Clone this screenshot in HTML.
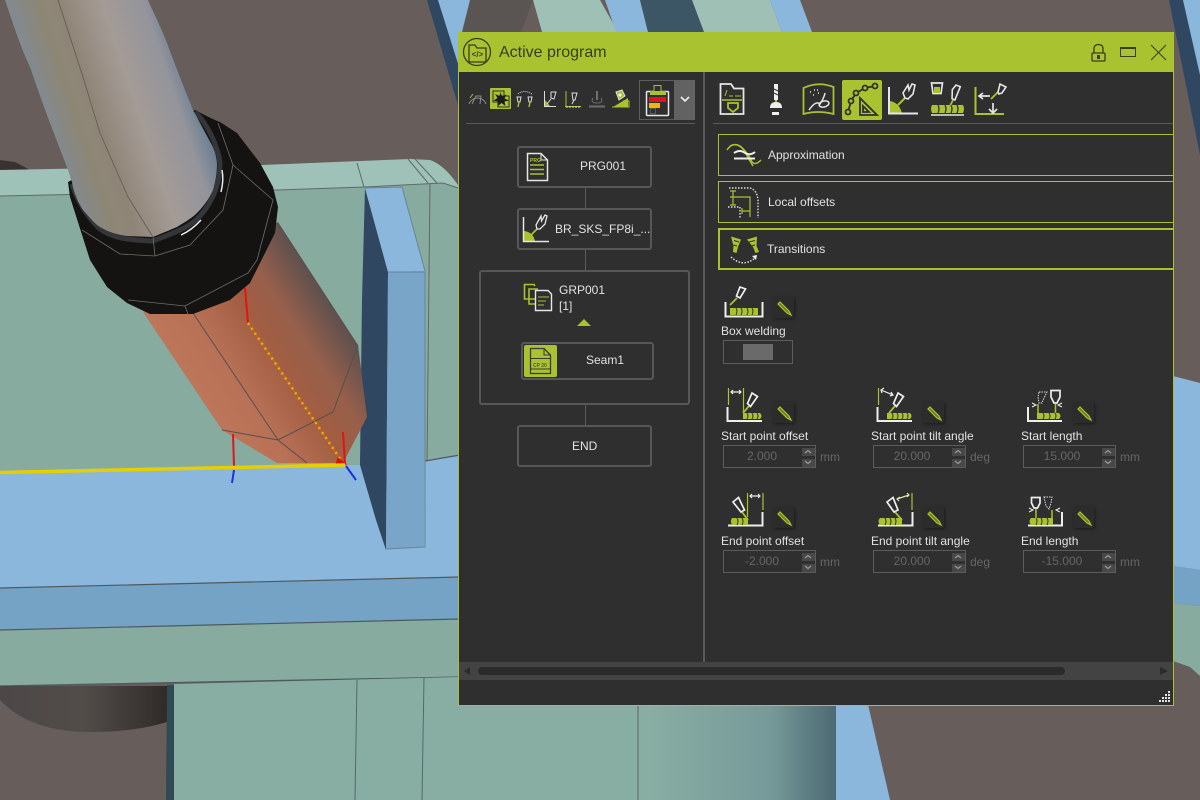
<!DOCTYPE html>
<html><head><meta charset="utf-8"><title>Active program</title>
<style>
html,body{margin:0;padding:0;width:1200px;height:800px;overflow:hidden;background:#675d5b}
body{position:relative;font:12px/14px "Liberation Sans",sans-serif;color:#e0e0e0}
svg{position:absolute;left:0;top:0}
.a{position:absolute;box-sizing:border-box;white-space:nowrap}
.t{position:absolute;white-space:nowrap;line-height:14px;font-size:12px;color:#e2e2e2}
.node{position:absolute;box-sizing:border-box;border:2px solid #575757;border-radius:3px}
.inp{position:absolute;box-sizing:border-box;width:93px;height:23px;border:1px solid #5c5c5c;color:#666;text-align:center;line-height:21px;padding-right:15px;font-size:12px}
.sp{position:absolute;left:78px;width:13px;height:8px;background:#484848}
.u{position:absolute;color:#666;font-size:12px;line-height:14px}
.eb{position:absolute;width:21px;height:21px;background:#2c2c2c;border-radius:2px;box-shadow:1px 1px 3px rgba(0,0,0,.45)}
</style></head><body>
<svg width="1200" height="800" viewBox="0 0 1200 800">
<defs>
<linearGradient id="tube" gradientUnits="userSpaceOnUse" x1="40" y1="120" x2="205" y2="65">
<stop offset="0" stop-color="#7f8b98"/><stop offset=".2" stop-color="#8d8675"/><stop offset=".32" stop-color="#8f8577"/><stop offset=".55" stop-color="#a49b96"/><stop offset=".78" stop-color="#93949b"/><stop offset=".92" stop-color="#627a92"/><stop offset="1" stop-color="#8793a0"/></linearGradient>
<linearGradient id="cop" gradientUnits="userSpaceOnUse" x1="143" y1="312" x2="278" y2="224">
<stop offset="0" stop-color="#bd7659"/><stop offset=".25" stop-color="#b87156"/><stop offset=".55" stop-color="#a25e42"/><stop offset=".75" stop-color="#975f4b"/><stop offset="1" stop-color="#5f504e"/></linearGradient>
<linearGradient id="cyl" x1="0" x2="1" y1="0" y2="0"><stop offset="0" stop-color="#88ada3"/><stop offset=".72" stop-color="#88ada3"/><stop offset=".9" stop-color="#769a99"/><stop offset="1" stop-color="#4c6a72"/></linearGradient>
<linearGradient id="dk" x1="0" x2="1" y1="0" y2="0"><stop offset="0" stop-color="#4c4847"/><stop offset=".5" stop-color="#524c49"/><stop offset="1" stop-color="#2f2b29"/></linearGradient>
</defs>
<rect width="1200" height="800" fill="#675d5b"/>
<!-- top stripes -->
<polygon points="427,0 438,0 460,70 460,112" fill="#2f4760"/>
<polygon points="438,0 470,0 460,70" fill="#8bb7dc"/>
<polygon points="470,0 533,0 521,32 462,32" fill="#5a5553"/>
<polygon points="533,0 600,0 618,32 542,32" fill="#9ec0b5"/>
<polygon points="605,0 640,0 648,32 616,32" fill="#8bb7dc"/>
<polygon points="640,0 692,0 704,32 648,32" fill="#3d5666"/>
<polygon points="692,0 770,0 782,32 704,32" fill="#9ec0b5"/>
<polygon points="770,0 800,0 812,32 782,32" fill="#8bb7dc"/>
<!-- right side -->
<polygon points="1169,0 1183,0 1200,75 1200,155" fill="#2f4760"/>
<polygon points="1183,0 1200,0 1200,75" fill="#8bb7dc"/>
<polygon points="1173,376 1200,383 1200,570 1173,566" fill="#8bb7dc"/>
<polygon points="1173,566 1200,570 1200,606 1173,603" fill="#74a3c6"/>
<polygon points="1173,603 1200,606 1200,676 1190,667 1173,661" fill="#87ab9f"/>
<!-- dark shape at left -->
<polygon points="0,160 15,162 30,170 0,170" fill="#3a3230"/>
<!-- green block -->
<path d="M0 170L262 165 410 159 430 160Q445 165 460 188L443 183 365 187 277 190 0 196Z" fill="#9fc2b8"/>
<polygon points="0,196 277,190 365,187 443,183 460,188 460,480 0,480" fill="#87ab9f"/>
<path d="M0 196L277 190 365 187 443 183 458 188M357 163L364 187M408 159L428 183M415 159L437 183M430 183L427 465" stroke="#5e6a68" stroke-width="1" fill="none"/>
<!-- blue plate -->
<polygon points="0,473 345,465 388,465 425,461 460,455 460,640 0,640" fill="#8bb7dc"/>
<polygon points="0,588 460,577 460,619 0,630" fill="#74a3c6"/>
<polygon points="0,630 460,619 460,677 0,686" fill="#87ab9f"/>
<path d="M0 588L460 577M0 630L460 619M0 686L460 677M425 461L460 455" stroke="#4e5a60" stroke-width="1.200" fill="none"/>
<!-- bottom -->
<path d="M0 686H167V722Q135 732 90 732 30 732 0 700Z" fill="url(#dk)"/>
<polygon points="167,685 174,685 174,800 166,800" fill="#2f4a52"/>
<polygon points="174,684 460,677 836,677 836,800 174,800" fill="url(#cyl)"/>
<path d="M357 680L355 800M424 678L422 800M638 700V800" stroke="#58686a" fill="none"/>
<polygon points="836,700 867,700 890,800 836,800" fill="#8bb7dc"/>
<path d="M860 705Q875 705 885 700H870Z" fill="#3c3634"/>
<!-- vertical plate -->
<polygon points="365,188 388,272 386,550 376,520 360,465 362,300" fill="#2f4760"/>
<polygon points="365,188 402,187 425,271 388,272" fill="#8bb7dc"/>
<polygon points="388,272 425,271 424,547 386,549" fill="#78a5c8"/>
<path d="M365 188L402 187 425 271M388 272H425V547L386 549" stroke="#6b8494" fill="none"/>
<!-- copper -->
<polygon points="143,312 278,222 358,345 367,417 343,463 277,463 222,430" fill="url(#cop)"/>
<path d="M193 313L278 440 333 412 358 345M222 430L278 440 307 463" stroke="#55504e" stroke-width="1" fill="none"/>
<!-- collar -->
<path d="M195 110C205 115 212 119 220 122L237 133 260 163 273 187 278 207 275 233 250 283 230 300 193 314 150 314 127 303 107 287 90 260 70 197 68 182Z" fill="#141312"/>
<path d="M72 184C76 198 86 216 100 229 112 238 128 240 153 241 170 234 190 228 200 216 214 200 220 182 220 163 218 145 206 122 195 112" fill="none" stroke="#34363a" stroke-width="5"/>
<path d="M181 235Q192 230 201 220M222 170Q224 180 221 192" stroke="#e6ecf2" stroke-width="1.500" fill="none"/>
<path d="M82 230L120 254 155 256 190 245 223 210 233 165 218 123M233 165L273 200 257 260 248 273 185 306 128 300M185 306L188 314M153 237L155 256" stroke="#6e6e6e" fill="none" stroke-width=".8"/>
<!-- tube -->
<path d="M5 0C15 30 22 50 30 67 38 90 45 110 50 123L68 170C70 176 71 180 72 182 74 195 80 205 83 210 90 218 95 224 100 227 108 232 118 235 127 236L153 237C160 234 170 230 177 227 185 222 192 218 197 213 205 205 210 197 213 190 216 180 217 172 217 163 216 155 215 152 213 147L193 110C185 90 175 65 167 43 160 25 153 12 148 0Z" fill="url(#tube)"/>
<path d="M58 0L83 77 100 133 128 197 153 237" stroke="#5b5b5b" fill="none" stroke-width=".8"/>
<!-- axes -->
<g fill="none" stroke-linecap="butt">
<path d="M245 288L248 323M233 434L234 466M343 432L345 463" stroke="#e01616" stroke-width="2"/>
<path d="M234 470L232 483M346 466L356 480" stroke="#1a2fe6" stroke-width="2"/>
<path d="M248 323L343 463" stroke="#c9650f" stroke-width="1.500"/>
<path d="M248 323L343 463" stroke="#e8b010" stroke-width="2.500" stroke-dasharray="2 4"/>
<path d="M338 458L346 464 336 464Z" fill="#d81010" stroke="#d81010"/>
<path d="M0 472.500L345 465" stroke="#e6cf00" stroke-width="3.500"/>
</g>
</svg>

<!-- PANEL -->
<div class="a" style="left:458px;top:32px;width:716px;height:674px;background:#2f2f2f;border:1px solid #a9c230"></div>
<div class="a" style="left:458px;top:32px;width:716px;height:40px;background:#a9c230"></div>
<div class="t" style="left:499px;top:43px;font-size:16px;line-height:20px;color:#3a3d20">Active program</div>
<div class="a" style="left:703px;top:72px;width:2px;height:590px;background:#5a5a5a"></div>
<div class="a" style="left:459px;top:662px;width:714px;height:18px;background:#434343"></div>
<div class="a" style="left:478px;top:667px;width:587px;height:8px;border-radius:4px;background:#2b2b2b"></div>
<div class="a" style="left:466px;top:123px;width:229px;height:1px;background:#5a5a5a"></div>
<div class="a" style="left:713px;top:123px;width:460px;height:1px;background:#5a5a5a"></div>

<!-- dropdown -->
<div class="a" style="left:639px;top:80px;width:56px;height:40px;border:1px solid #5c5c5c"></div>
<div class="a" style="left:674px;top:80px;width:21px;height:40px;background:#626262"></div>
<!-- active bgs -->
<div class="a" style="left:490px;top:88px;width:21px;height:21px;background:#a9c230;border-radius:1px"></div>
<div class="a" style="left:842px;top:80px;width:40px;height:40px;background:#a9c230;border-radius:2px"></div>

<!-- sections -->
<div class="a" style="left:718px;top:134px;width:455px;height:42px;border:1px solid #a9c230;border-right:0"></div>
<div class="a" style="left:718px;top:181px;width:455px;height:42px;border:1px solid #a9c230;border-right:0"></div>
<div class="a" style="left:718px;top:228px;width:455px;height:42px;border:2px solid #a9c230;border-right:0"></div>
<div class="t" style="left:768px;top:148px">Approximation</div>
<div class="t" style="left:768px;top:195px">Local offsets</div>
<div class="t" style="left:767px;top:242px">Transitions</div>

<!-- tree -->
<div class="a" style="left:585px;top:188px;width:1px;height:20px;background:#5b5b5b"></div>
<div class="a" style="left:585px;top:250px;width:1px;height:20px;background:#5b5b5b"></div>
<div class="a" style="left:585px;top:405px;width:1px;height:20px;background:#5b5b5b"></div>
<div class="node" style="left:517px;top:146px;width:135px;height:42px"></div>
<div class="node" style="left:517px;top:208px;width:135px;height:42px"></div>
<div class="node" style="left:479px;top:270px;width:211px;height:135px"></div>
<div class="node" style="left:521px;top:342px;width:133px;height:38px"></div>
<div class="a" style="left:524px;top:345px;width:33px;height:32px;background:#a9c230;border-radius:2px"></div>
<div class="node" style="left:517px;top:425px;width:135px;height:42px"></div>
<div class="t" style="left:580px;top:159px">PRG001</div>
<div class="t" style="left:555px;top:222px">BR_SKS_FP8i_...</div>
<div class="t" style="left:559px;top:283px">GRP001</div>
<div class="t" style="left:559px;top:299px">[1]</div>
<div class="t" style="left:586px;top:353px">Seam1</div>
<div class="t" style="left:572px;top:439px">END</div>

<!-- box welding -->
<div class="eb" style="left:773px;top:297px"></div>
<div class="t" style="left:721px;top:324px">Box welding</div>
<div class="a" style="left:723px;top:340px;width:70px;height:24px;border:1px solid #5c5c5c"></div>
<div class="a" style="left:743px;top:344px;width:30px;height:16px;background:#6a6a6a"></div>

<!-- fields row 1 -->
<div class="eb" style="left:773px;top:402px"></div><div class="eb" style="left:923px;top:402px"></div><div class="eb" style="left:1073px;top:402px"></div>
<div class="t" style="left:721px;top:429px">Start point offset</div>
<div class="t" style="left:871px;top:429px">Start point tilt angle</div>
<div class="t" style="left:1021px;top:429px">Start length</div>
<div class="inp" style="left:723px;top:445px">2.000<div class="sp" style="top:2px"></div><div class="sp" style="top:13px"></div></div>
<div class="inp" style="left:873px;top:445px">20.000<div class="sp" style="top:2px"></div><div class="sp" style="top:13px"></div></div>
<div class="inp" style="left:1023px;top:445px">15.000<div class="sp" style="top:2px"></div><div class="sp" style="top:13px"></div></div>
<div class="u" style="left:820px;top:450px">mm</div><div class="u" style="left:970px;top:450px">deg</div><div class="u" style="left:1120px;top:450px">mm</div>
<!-- fields row 2 -->
<div class="eb" style="left:773px;top:507px"></div><div class="eb" style="left:923px;top:507px"></div><div class="eb" style="left:1073px;top:507px"></div>
<div class="t" style="left:721px;top:534px">End point offset</div>
<div class="t" style="left:871px;top:534px">End point tilt angle</div>
<div class="t" style="left:1021px;top:534px">End length</div>
<div class="inp" style="left:723px;top:550px">-2.000<div class="sp" style="top:2px"></div><div class="sp" style="top:13px"></div></div>
<div class="inp" style="left:873px;top:550px">20.000<div class="sp" style="top:2px"></div><div class="sp" style="top:13px"></div></div>
<div class="inp" style="left:1023px;top:550px">-15.000<div class="sp" style="top:2px"></div><div class="sp" style="top:13px"></div></div>
<div class="u" style="left:820px;top:555px">mm</div><div class="u" style="left:970px;top:555px">deg</div><div class="u" style="left:1120px;top:555px">mm</div>

<!-- ICON OVERLAY -->
<svg width="1200" height="800" viewBox="0 0 1200 800" fill="none">
<defs>
<g id="pen"><path d="M5 7L7 5 16 14 18 18 14 16Z" fill="#6f7d22" stroke="#a9c230" stroke-width="1.200"/></g>
</defs>

<!-- title icons -->
<g stroke="#3a3d20" stroke-width="1.300">
<circle cx="477" cy="52" r="13.500"/>
<path d="M469 62V45H475L477 48H486V62Z"/>
<path d="M1093 53H1104Q1105 53 1105 54V60Q1105 61 1104 61H1093Q1092 61 1092 60V54Q1092 53 1093 53ZM1094 53V49Q1094 44.500 1098.500 44.500 1103 44.500 1103 49V53"/>
<path d="M1120.500 48.500H1135.500V56.500H1120.500Z" stroke-width="1"/><path d="M1120 48H1136" stroke-width="2"/>
<path d="M1151 45L1166 60M1166 45L1151 60" stroke-width="1"/>
</g>
<rect x="1097" y="55" width="3" height="4" fill="#3a3d20"/>
<text x="477.500" y="57" font-family="Liberation Sans" font-size="8" font-weight="bold" text-anchor="middle" fill="#3a3d20">&lt;/&gt;</text>

<!-- left toolbar -->
<path d="M469 104A9 9 0 0 1 486 104" stroke="#8a8a8a"/><path d="M472 104L476 96H481L480 104" stroke="#8a8a8a"/><path d="M470 98L473 94" stroke="#a9c230"/>
<g stroke="#2f2f2f"><rect x="493" y="91" width="11" height="11"/><rect x="498" y="96" width="11" height="11"/></g>
<path d="M500.500 92L502 96.500 506.500 94.500 504.500 98.500 509 100.500 504.500 101.500 505.500 106 501.500 103 498 106 498.500 101.500 493.500 100.500 497.500 98 495 94 499.500 96Z" fill="#1c1c1c"/>
<path d="M518 94Q524 89 532 94" stroke="#ddd" stroke-dasharray="1 1"/>
<path d="M517 97H521L520 102H518ZM528 97H532L531 102H529Z" stroke="#ddd"/><path d="M519 102L518 107M530 102L529 107" stroke="#a9c230" stroke-width="1.400"/>
<path d="M544.500 91V106.500H556" stroke="#ddd"/><path d="M545 100L550 106H545Z" fill="#a9c230"/><path d="M551 92H556L554 99 551 98Z M551 99L547 104" stroke="#ddd"/>
<path d="M566 91V106M565 106.500H581" stroke="#a9c230"/><path d="M572 93H577L575 100H573ZM574 100L572 104" stroke="#ddd"/><path d="M566 107H581" stroke="#ddd" stroke-dasharray="2 1"/>
<g stroke="#6f6f6f"><path d="M597 91V100" stroke-width="2"/><path d="M593 98Q590 103 597 103 604 103 601 98"/><path d="M589 106.500H605" stroke-width="2"/></g>
<path d="M613 107L628 98V107Z" fill="#a9c230"/><path d="M612 107H629V101H623" stroke="#a9c230"/><path d="M616 92L622 90 625 96 619 100Z" fill="#a9c230" stroke="#ddd"/><circle cx="620" cy="95" r="1.500" fill="#fff"/>
<!-- clipboard -->
<rect x="646.500" y="91.500" width="22" height="24" rx="1" stroke="#e8e8e8" stroke-width="1.500"/>
<rect x="650" y="91" width="16" height="4" fill="#a9c230"/><rect x="654" y="85.500" width="7" height="6" stroke="#a9c230" fill="#2f2f2f"/>
<rect x="649" y="97" width="17" height="5" fill="#e0141a"/><rect x="649" y="103" width="11" height="5" fill="#f2b40a"/><rect x="650.500" y="108.500" width="5" height="5" stroke="#5a5a5a"/>
<path d="M681 97L685 101 689 97" stroke="#eee" stroke-width="1.600"/>

<!-- right toolbar -->
<path d="M720.500 84H731L734 88.500H743.500V114H720.500Z" stroke="#e6e6e6" stroke-width="1.800"/>
<path d="M722 100H742" stroke="#a9c230" stroke-width="1.500"/><path d="M728 103H738V108L733 112 728 108Z" stroke="#a9c230" stroke-width="1.800"/><path d="M725 96L727 90M729 96H733M735 96H741" stroke="#a9c230"/>
<rect x="774" y="84" width="4" height="16" fill="#eee"/><path d="M774 89L778 91M774 93L778 95" stroke="#2f2f2f"/>
<path d="M770 108Q770 102 776 102 782 102 782 108Z" fill="#eee"/><rect x="772" y="112" width="7" height="3" fill="#eee"/><rect x="775" y="100" width="2" height="2" fill="#a9c230"/>
<path d="M803.500 88Q818 81 833.500 87V114Q818 110 803.500 114Z" stroke="#a9c230" stroke-width="1.800"/>
<path d="M809 110Q816 100 820 104 824 98 825 93M810 92H811M814 90H815M818 93H819M813 95H814M817 90H818" stroke="#e6e6e6" stroke-width="1.500"/><ellipse cx="824" cy="104" rx="5" ry="3" stroke="#e6e6e6" stroke-width="1.500" transform="rotate(-15 824 104)"/>
<g stroke="#2f2f2f" stroke-width="1.800"><path d="M875 86L865 88 856 93 851 101 848 112"/><path d="M860 98V115H877ZM863 106V112H869Z"/></g>
<g fill="#a9c230" stroke="#2f2f2f" stroke-width="1.800"><circle cx="875" cy="86" r="2.500"/><circle cx="865" cy="88" r="2.500"/><circle cx="856" cy="93" r="2.500"/><circle cx="851" cy="101" r="2.500"/><circle cx="848" cy="112" r="2.500"/></g>
<path d="M890 101Q900 103 902 114H890Z" fill="#a9c230"/><path d="M889 87V113.500H918" stroke="#e6e6e6" stroke-width="2"/><path d="M898 105L905 98" stroke="#a9c230" stroke-width="2"/><path d="M905 98L903 93 908 85 909 90 912 84 915 85 913 94 908 99Z" stroke="#e6e6e6" stroke-width="1.600"/>
<path d="M931.500 83H942.500L941 93.500H933Z" stroke="#e6e6e6" stroke-width="1.700"/><rect x="934" y="87" width="6" height="6" fill="#a9c230"/>
<path d="M952 90L955 85 959.500 86 956 100 953 99Z" stroke="#e6e6e6" stroke-width="1.600" transform="rotate(8 955 92)"/><path d="M953 100L950 106" stroke="#a9c230" stroke-width="1.800"/>
<path d="M932 105H963Q965 109 963 113H932Q930 109 932 105Z" fill="#a9c230"/><path d="M938 105Q940 109 938 113M945 105Q947 109 945 113M951 105Q953 109 951 113M957 105Q959 109 957 113" stroke="#2f2f2f" stroke-width="1.300"/><path d="M931 115H964" stroke="#e6e6e6" stroke-width="1.500"/>
<path d="M975.500 87V114H1004" stroke="#a9c230" stroke-width="2"/><path d="M980 96H990M983 93L979 96 983 99" stroke="#e6e6e6" stroke-width="1.700"/><path d="M993 103V112M989 109L993 113 997 109" stroke="#e6e6e6" stroke-width="1.700"/><path d="M991 99L998 92" stroke="#a9c230" stroke-width="1.900"/><path d="M998 92L1000 84 1006 87 1002 93 999 94Z" stroke="#e6e6e6" stroke-width="1.600"/>

<!-- section icons -->
<path d="M727 150Q733 141 741 147 748 153 751 160 754 167 761 160" stroke="#a9c230" stroke-width="1.500"/><path d="M730 146Q738 142 744 150 748 158 753 166" stroke="#a9c230" stroke-width="1.500"/>
<path d="M734 153Q740 149 745 153 750 156 755 152M734 158.500H755" stroke="#eee" stroke-width="2"/>
<path d="M729 188H750Q757 190 758 200V218M728 207H740V218" stroke="#ddd" stroke-width="1.400" stroke-dasharray="1.500 1.500"/>
<path d="M730 197H750V217M733 191V205M730 191H736M730 205H736M742 211H750M742 208V214" stroke="#a9c230" stroke-width="1.200"/>
<path d="M731 236.500L741 239.500 738 247 736.500 253 733 252 733.500 246Z" fill="#a9c230"/><path d="M734 240.500L739 242M733.500 245L737 246" stroke="#2f2f2f"/>
<path d="M747 239.500L757 236.500 756.500 246 759 252 755.500 253 753 247Z" fill="#a9c230"/><path d="M749 242L755 240.500M751 246L755 245" stroke="#2f2f2f"/>
<path d="M731 257Q743 268 755 258" stroke="#ddd" stroke-width="1.500" stroke-dasharray="1.500 1.500"/><path d="M752 256L757 255 756 260Z" fill="#eee"/>

<!-- tree icons -->
<path d="M527.500 153.500H541L547.500 160V180.500H527.500Z" stroke="#e6e6e6" stroke-width="1.500"/><path d="M541 154V160H547" stroke="#e6e6e6"/>
<path d="M530 165H544M530 169.500H544M530 174H544" stroke="#a9c230" stroke-width="1.500"/>
<text x="530" y="162" font-family="Liberation Sans" font-size="5" font-weight="bold" fill="#a9c230">PRG</text>
<path d="M524 231Q533 232 535 241H524Z" fill="#a9c230"/><path d="M523.500 217V241.500H549" stroke="#e6e6e6" stroke-width="1.500"/><path d="M531 235L537 229" stroke="#a9c230" stroke-width="1.700"/><path d="M537 229L536 225 541 216 541.500 221 545 215 547 216 545 224 540 229Z" stroke="#e6e6e6" stroke-width="1.300"/>
<path d="M535 299H524.500V284.500H534L535 286M540 304H529V289H538" stroke="#a9c230" stroke-width="1.600"/>
<path d="M535.500 290.500H548L551.500 294V310.500H535.500Z" fill="#2f2f2f" stroke="#e6e6e6" stroke-width="1.400"/><path d="M538 297H549M538 301H546M538 305H544" stroke="#a9c230"/>
<path d="M577 326L584 319 591 326Z" fill="#a9c230"/>
<path d="M530.500 348.500H544L550.500 355V373.500H530.500Z" stroke="#3a3a3a" stroke-width="1.300"/><path d="M544 349V355H550M531 369H550" stroke="#3a3a3a"/>
<path d="M531 358.500H550" stroke="#3a3a3a"/>
<text x="533" y="367" font-family="Liberation Sans" font-size="5" font-weight="bold" fill="#556020">CP 20</text>

<!-- pencils -->
<use href="#pen" x="773" y="297"/>
<use href="#pen" x="773" y="402"/><use href="#pen" x="923" y="402"/><use href="#pen" x="1073" y="402"/>
<use href="#pen" x="773" y="507"/><use href="#pen" x="923" y="507"/><use href="#pen" x="1073" y="507"/>

<!-- box weld -->
<path d="M725.500 302V316.500H762.500V302" stroke="#eee" stroke-width="2"/>
<rect x="730" y="308" width="28" height="7" fill="#a9c230"/><path d="M736 308Q738 311 736 315M741 308Q743 311 741 315M747 308Q749 311 747 315M752 308Q754 311 752 315" stroke="#2f2f2f"/>
<path d="M740 287L745.500 289 740 298 736.500 296Z" stroke="#eee" stroke-width="1.700"/><path d="M737 298L730 305" stroke="#a9c230" stroke-width="1.800"/>

<!-- start offset -->
<path d="M727.500 407V421H762" stroke="#eee" stroke-width="2"/>
<path d="M728.500 388V405M743.500 388V412" stroke="#a9c230" stroke-width="1.200"/>
<path d="M731 392H741M733 390L731 392 733 394M739 390L741 392 739 394" stroke="#eee" stroke-width="1.200"/>
<path d="M752 393L757.500 396.500 750.500 406.500 747.500 403.500Z" stroke="#eee" stroke-width="1.700"/><path d="M749 406L743 413" stroke="#a9c230" stroke-width="1.800"/>
<path d="M743 413H760Q763 416 760 419H743Z" fill="#a9c230"/><path d="M747 413Q749 416 747 419M752 413Q754 416 752 419M757 413Q759 416 757 419" stroke="#2f2f2f"/>
<!-- start tilt -->
<path d="M877.500 407V421H912" stroke="#eee" stroke-width="2"/>
<path d="M878.500 388V405" stroke="#a9c230" stroke-width="1.200"/>
<path d="M881 390L893 395M884 388L881 390 882 393M891 392L893 395 890 396" stroke="#eee" stroke-width="1.200"/>
<path d="M898 393L903.500 396.500 896.500 406.500 893.500 403.500Z" stroke="#eee" stroke-width="1.700"/><path d="M895 406L889 413" stroke="#a9c230" stroke-width="1.800"/>
<path d="M887 413H910Q913 416 910 419H887Z" fill="#a9c230"/><path d="M892 413Q894 416 892 419M897 413Q899 416 897 419M902 413Q904 416 902 419M907 413Q909 416 907 419" stroke="#2f2f2f"/>
<!-- start length -->
<path d="M1028 407V421H1062" stroke="#eee" stroke-width="2"/>
<path d="M1039 392L1047 392 1044 398 1042 403 1039 403 1038 397Z" stroke="#ddd" stroke-dasharray="1.500 1"/>
<path d="M1051 390.500H1060V397L1057 403H1054L1051 397Z" stroke="#eee" stroke-width="1.700"/>
<path d="M1038 404V413M1055.500 404V413" stroke="#a9c230" stroke-width="1.500"/>
<path d="M1032 403L1036 405 1032 407M1062 403L1058 405 1062 407" stroke="#eee"/>
<path d="M1037 413H1059Q1062 416 1059 419H1037Z" fill="#a9c230"/><path d="M1043 413Q1045 416 1043 419M1049 413Q1051 416 1049 419M1055 413Q1057 416 1055 419" stroke="#2f2f2f"/>

<!-- end offset -->
<path d="M762.500 512V525.500H728" stroke="#eee" stroke-width="2"/>
<path d="M747.500 493V517M763 493V510" stroke="#a9c230" stroke-width="1.200"/>
<path d="M750 496H760M752 494L750 496 752 498M758 494L760 496 758 498" stroke="#eee" stroke-width="1.200"/>
<path d="M733 502L738.500 497.500 744.500 510 741 512Z" stroke="#eee" stroke-width="1.700"/><path d="M742 512L748 520" stroke="#a9c230" stroke-width="1.800"/>
<path d="M732 518H748V525H732Q730 521 732 518Z" fill="#a9c230"/><path d="M737 518Q739 521 737 525M742 518Q744 521 742 525" stroke="#2f2f2f"/>
<!-- end tilt -->
<path d="M912.500 512V525.500H878" stroke="#eee" stroke-width="2"/>
<path d="M912 493V510" stroke="#a9c230" stroke-width="1.200"/>
<path d="M897 499L909 495M900 497L897 499 899 501M907 493L909 495 907 497" stroke="#dde8a8" stroke-width="1.200"/>
<path d="M887 502L893 497.500 898 510 894 512Z" stroke="#eee" stroke-width="1.700"/><path d="M895 512L902 520" stroke="#a9c230" stroke-width="1.800"/>
<path d="M880 518H902V525H880Q877 521 880 518Z" fill="#a9c230"/><path d="M885 518Q887 521 885 525M890 518Q892 521 890 525M895 518Q897 521 895 525" stroke="#2f2f2f"/>
<!-- end length -->
<path d="M1062 512V525.500H1028" stroke="#eee" stroke-width="2"/>
<path d="M1031.500 497.500H1040V503L1037.500 508H1034L1031.500 503Z" stroke="#eee" stroke-width="1.700"/>
<path d="M1044 497L1052 497 1051 503 1049 509 1046 506Z" stroke="#ddd" stroke-dasharray="1.500 1"/>
<path d="M1036 509V518M1052 510V518" stroke="#a9c230" stroke-width="1.500"/>
<path d="M1029 508L1033 510 1029 512M1060 508L1056 510 1060 512" stroke="#eee"/>
<path d="M1031 518H1053V525H1031Q1028 521 1031 518Z" fill="#a9c230"/><path d="M1036 518Q1038 521 1036 525M1041 518Q1043 521 1041 525M1047 518Q1049 521 1047 525" stroke="#2f2f2f"/>

<!-- scroll arrows + grip -->
<path d="M470 667L464 671 470 675Z" fill="#2b2b2b"/><path d="M1160 667L1168 671 1160 675Z" fill="#2b2b2b"/>
<g fill="#dfe3ea"><rect x="1168" y="691" width="2" height="2"/><rect x="1165" y="694" width="2" height="2"/><rect x="1168" y="694" width="2" height="2"/><rect x="1162" y="697" width="2" height="2"/><rect x="1165" y="697" width="2" height="2"/><rect x="1168" y="697" width="2" height="2"/><rect x="1159" y="700" width="2" height="2"/><rect x="1162" y="700" width="2" height="2"/><rect x="1165" y="700" width="2" height="2"/><rect x="1168" y="700" width="2" height="2"/></g>
<!-- spinners -->
<g stroke="#9a9a9a" stroke-width="1.200">
<path d="M805 453L808 450.500 811 453M805 461L808 463.500 811 461M955 453L958 450.500 961 453M955 461L958 463.500 961 461M1105 453L1108 450.500 1111 453M1105 461L1108 463.500 1111 461M805 558L808 555.500 811 558M805 566L808 568.500 811 566M955 558L958 555.500 961 558M955 566L958 568.500 961 566M1105 558L1108 555.500 1111 558M1105 566L1108 568.500 1111 566"/>
</g>
</svg>
</body></html>
